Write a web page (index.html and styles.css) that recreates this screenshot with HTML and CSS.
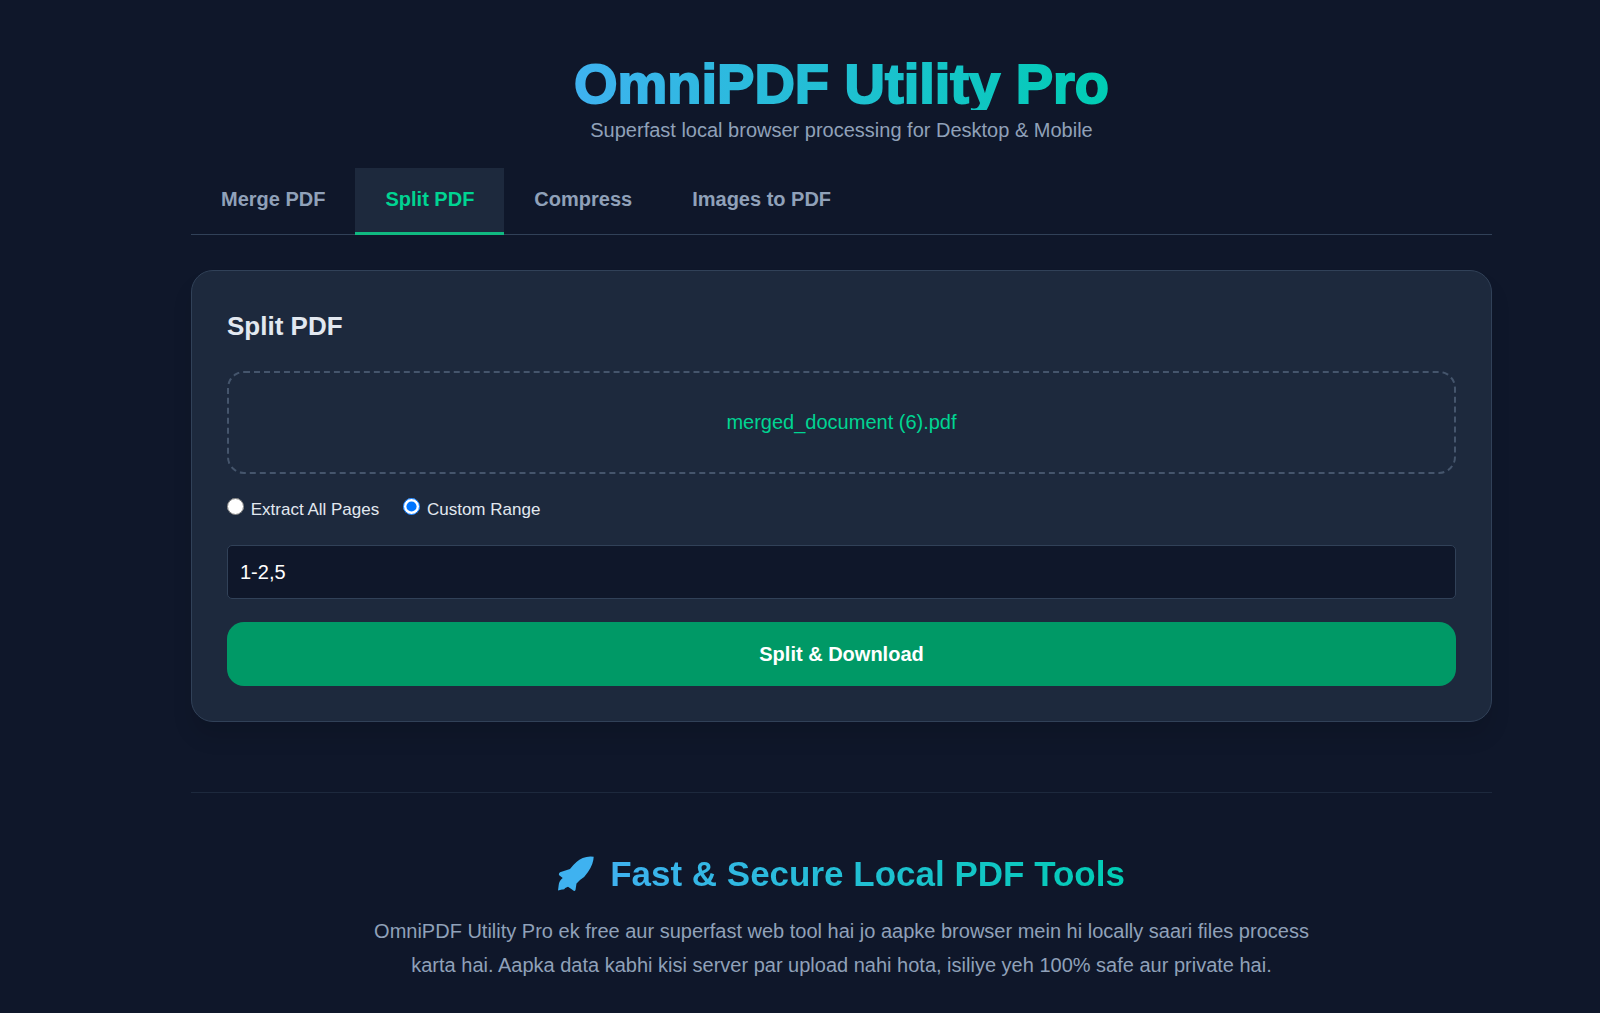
FILE: index.html
```
<!DOCTYPE html>
<html lang="en">
<head>
    <meta charset="UTF-8">
    <meta name="viewport" content="width=device-width, initial-scale=1.0">
    <title>OmniPDF Utility Pro</title>
    <link rel="stylesheet" href="styles.css">
</head>
<body>
    <div class="container">
        <header>
            <h1 class="gradient-text">OmniPDF Utility Pro</h1>
            <p class="tagline">Superfast local browser processing for Desktop &amp; Mobile</p>
        </header>

        <nav class="tabs">
            <button type="button" class="tab">Merge PDF</button>
            <button type="button" class="tab active">Split PDF</button>
            <button type="button" class="tab">Compress</button>
            <button type="button" class="tab">Images to PDF</button>
        </nav>

        <section class="card">
            <h2>Split PDF</h2>
            <button type="button" class="drop-zone">merged_document (6).pdf</button>
            <div class="modes">
                <label><input type="radio" name="splitMode" value="all"> Extract All Pages</label>
                <label><input type="radio" name="splitMode" value="range" checked> Custom Range</label>
            </div>
            <input type="text" class="range" value="1-2,5" aria-label="Page range">
            <button type="button" class="submit">Split &amp; Download</button>
        </section>

        <section class="about">
            <h2 class="about-title">
                <svg class="rocket" viewBox="0 0 36 36" aria-hidden="true">
                    <path d="M35.700 .7Q30 -.2 24.700 2Q18 5 12 13L2 16.300Q0 18 1.500 19.500L4.700 22Q1 25 .7 29L0 34.500L4 33.500Q6 34 7.300 32L10 30.700L14 33.500Q16.500 36 17.500 34L18.500 27.500L22 24Q27 21 30 16Q35.500 8 35.700 .7Z"/>
                </svg>
                <span class="gradient-text">Fast &amp; Secure Local PDF Tools</span>
            </h2>
            <p class="about-text">OmniPDF Utility Pro ek free aur superfast web tool hai jo aapke browser mein hi locally saari files process karta hai. Aapka data kabhi kisi server par upload nahi hota, isiliye yeh 100% safe aur private hai.</p>
        </section>
    </div>
</body>
</html>
```
FILE: styles.css
```
* {
    box-sizing: border-box;
}
body {
    margin: 0;
    padding: 58px 108px 32px 191px;
    font-family: "Liberation Sans", Arial, sans-serif;
    font-size: 20px;
    line-height: 32px;
    background-color: #0f172a;
    color: #e2e8f0;
}
h1, h2, p {
    margin: 0;
}
button, input {
    font: inherit;
}
header {
    display: flex;
    flex-direction: column;
    align-items: center;
}
h1 {
    font-size: 56px;
    font-weight: 900;
    line-height: 52px;
    -webkit-text-stroke: 2px transparent;
}
.gradient-text {
    background: linear-gradient(to right, #3fb2f0, #00cdb4);
    -webkit-background-clip: text;
    background-clip: text;
    color: transparent;
}
.tagline {
    margin-top: 6px;
    line-height: 28px;
    color: #90a1b9;
}
.tabs {
    display: flex;
    margin: 24px 0 35px;
    border-bottom: 1px solid #314158;
}
.tab {
    padding: 15px 30px 17px;
    border: none;
    border-bottom: 3px solid transparent;
    margin-bottom: -1px;
    background: none;
    color: #90a1b9;
    font-weight: bold;
    cursor: pointer;
}
.tab.active {
    background-color: #1d293d;
    border-bottom-color: #10b981;
    color: #00d492;
}
.card {
    display: flex;
    flex-direction: column;
    padding: 35px;
    background-color: #1d293d;
    border: 1px solid #314158;
    border-radius: 22px;
    box-shadow: 0 16px 20px rgba(0, 0, 0, 0.1);
}
.card h2 {
    margin: 2px 0 27px;
    font-size: 26px;
    line-height: 36px;
}
.drop-zone {
    padding: 34px;
    background: none;
    border: 2px dashed #45556c;
    border-radius: 17px;
    color: #00d492;
    line-height: 31px;
    cursor: pointer;
}
.modes {
    display: flex;
    gap: 24px;
    margin: 20px 0 19px;
    font-size: 17px;
}
.modes input {
    width: 17px;
    height: 17px;
    margin: 0 2px 0 0;
}
.range {
    width: 100%;
    padding: 10px 12px;
    background-color: #0f172a;
    border: 1px solid #314158;
    border-radius: 5px;
    color: #fff;
}
.submit {
    margin-top: 23px;
    padding: 16px;
    background-color: #009966;
    border: none;
    border-radius: 17px;
    color: #fff;
    font-weight: bold;
    cursor: pointer;
}
.about {
    margin-top: 70px;
    padding-top: 60px;
    border-top: 1px solid #1d293d;
    text-align: center;
}
.about-title {
    display: flex;
    justify-content: center;
    align-items: center;
    gap: 16px;
    margin-bottom: 19px;
    font-size: 35px;
    line-height: 42px;
}
.rocket {
    width: 36px;
    height: 36px;
    fill: #3fb2f0;
}
.about-text {
    max-width: 960px;
    margin: 0 auto;
    line-height: 34px;
    color: #90a1b9;
}
```
